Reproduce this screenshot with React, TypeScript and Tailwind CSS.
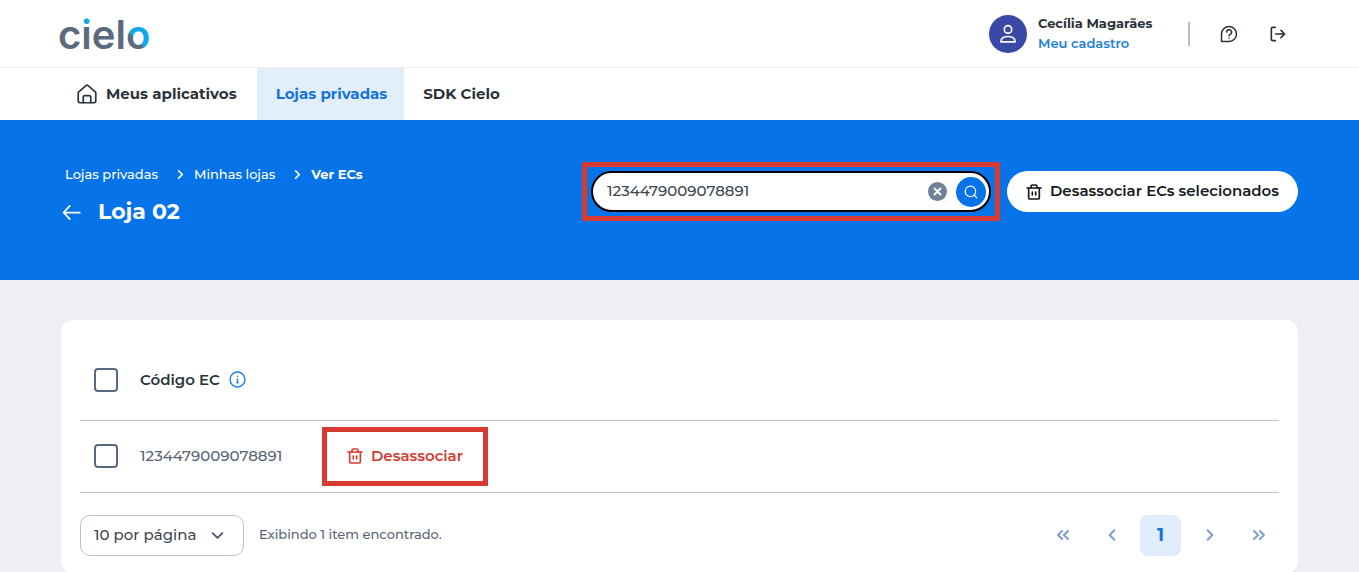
import React, { useState } from 'react'

type IconProps = {
    className?: string
}

const stores = [{ id: 1, code: '1234479009078891' }]

const Logo = () => (
    <svg
        viewBox="0 0 100 60"
        className="-ml-1 w-[100px] h-[60px]"
        role="img"
        aria-label="cielo"
    >
        <defs>
            <linearGradient
                id="dot"
                gradientUnits="userSpaceOnUse"
                x1="0"
                y1="0"
                x2="0"
                y2="60"
            >
                <stop offset="0.34" stopColor="#12a9ea" />
                <stop offset="0.34" stopColor="#5b6b7d" />
            </linearGradient>
            <linearGradient
                id="ring"
                gradientUnits="userSpaceOnUse"
                x1="67"
                y1="46"
                x2="91"
                y2="22"
            >
                <stop offset="0.46" stopColor="#5b6b7d" />
                <stop offset="0.46" stopColor="#12a9ea" />
            </linearGradient>
        </defs>
        <text
            x="1"
            y="45"
            fontSize="40"
            fontWeight="600"
            fontFamily="Inter, sans-serif"
            fill="#5b6b7d"
        >
            c<tspan fill="url(#dot)">i</tspan>el<tspan fill="url(#ring)">o</tspan>
        </text>
    </svg>
)

const Icon = ({
    className,
    children,
    strokeWidth = 2,
}: IconProps & { children: React.ReactNode; strokeWidth?: number }) => (
    <svg
        viewBox="0 0 24 24"
        fill="none"
        stroke="currentColor"
        strokeWidth={strokeWidth}
        strokeLinecap="round"
        strokeLinejoin="round"
        className={`shrink-0 ${className}`}
        aria-hidden="true"
    >
        {children}
    </svg>
)

const TrashIcon = ({ className }: IconProps) => (
    <Icon className={className} strokeWidth={2.5}>
        <path d="M1.500 6h21" />
        <path d="M4 6v14.500a2 2 0 0 0 2 2h12a2 2 0 0 0 2-2V6" />
        <path d="M7.500 6V3.500a2 2 0 0 1 2-2h5a2 2 0 0 1 2 2V6" />
        <path d="M9.500 12v4.500M14.500 12v4.500" />
    </Icon>
)

const ChevronRight = ({ className }: IconProps) => (
    <Icon className={className} strokeWidth={3.5}>
        <path d="M8 4l8 8-8 8" />
    </Icon>
)

const ChevronLeft = ({ className }: IconProps) => (
    <Icon className={className} strokeWidth={3.5}>
        <path d="M16 4l-8 8 8 8" />
    </Icon>
)

const Header = () => (
    <header className="flex items-center justify-between h-[68px] px-[61px] border-b border-[#eceef0]">
        <Logo />
        <div className="flex items-center">
            <span className="flex items-center justify-center w-[38px] h-[38px] rounded-full bg-[#3a48a8] text-white">
                <Icon className="w-5 h-5">
                    <circle cx="12" cy="6.500" r="4.500" />
                    <path d="M3.500 21.500c0-4.500 3.500-6.500 8.500-6.500s8.500 2 8.500 6.500z" />
                </Icon>
            </span>
            <div className="flex flex-col ml-[11px] pb-[2px] w-[122px] text-[13px] leading-5 whitespace-nowrap">
                <span className="font-bold">Cecília Magarães</span>
                <a href="#cadastro" className="font-semibold text-[#1a7fe0]">
                    Meu cadastro
                </a>
            </div>
            <span className="ml-7 w-[2px] h-6 bg-[#b5bccb]"></span>
            <button type="button" title="Ajuda" className="ml-[30px]">
                <Icon className="w-[18px] h-[18px]">
                    <path d="M2 22V12a10 10 0 1 1 10 10z" />
                    <path d="M8.800 9.500a3.300 3.300 0 1 1 4.700 3c-1 .5-1.500 1-1.500 2" />
                    <path d="M12 17.500v.1" />
                </Icon>
            </button>
            <button type="button" title="Sair" className="ml-8 mr-3">
                <Icon className="w-4 h-4" strokeWidth={2.5}>
                    <path d="M8 2H4a2 2 0 0 0-2 2v16a2 2 0 0 0 2 2h4" />
                    <path d="M8.500 12H22M16.500 6.500L22 12l-5.500 5.500" />
                </Icon>
            </button>
        </div>
    </header>
)

const Nav = () => (
    <nav className="flex h-[52px] px-[58px] text-[15px] font-bold">
        <a
            href="#aplicativos"
            className="flex items-center gap-[9px] pl-[19px] pr-5"
        >
            <Icon className="w-5 h-5">
                <path d="M1.500 10v10.500a2 2 0 0 0 2 2h4V16a2 2 0 0 1 2-2h5a2 2 0 0 1 2 2v6.500h4a2 2 0 0 0 2-2V10L13.300 1.900a2 2 0 0 0-2.600 0z" />
                <path d="M7.500 22.500h9" />
            </Icon>
            Meus aplicativos
        </a>
        <a
            href="#lojas"
            className="flex items-center pl-[19px] pr-[17px] bg-[#e3eefb] text-[#1473e0]"
        >
            Lojas privadas
        </a>
        <a href="#sdk" className="flex items-center px-[19px]">
            SDK Cielo
        </a>
    </nav>
)

const SearchBox = () => {
    const [search, setSearch] = useState('1234479009078891')

    return (
        <div className="p-1 border-[5px] border-[#d63a30] w-[418px]">
            <form
                className="flex items-center h-[41px] pl-[14px] pr-[3px] border-2 border-black rounded-full bg-white"
                onSubmit={(e) => e.preventDefault()}
            >
                <input
                    type="text"
                    aria-label="Buscar EC"
                    value={search}
                    onChange={(e) => setSearch(e.target.value)}
                    className="flex-1 min-w-0 text-[15px] font-medium outline-none text-[#40474f]"
                />
                <button
                    type="button"
                    title="Limpar"
                    onClick={() => setSearch('')}
                    className="flex items-center justify-center w-[19px] h-[19px] rounded-full bg-[#718096] text-white"
                >
                    <Icon className="w-[9px] h-[9px]" strokeWidth={5}>
                        <path d="M4 4l16 16M20 4L4 20" />
                    </Icon>
                </button>
                <button
                    type="submit"
                    title="Buscar"
                    className="flex items-center justify-center ml-[9px] w-[30px] h-[30px] rounded-full bg-[#0673e8] text-white"
                >
                    <Icon className="w-[14px] h-[14px]">
                        <circle cx="11" cy="11" r="9" />
                        <path d="M17.500 17.500L22 22" />
                    </Icon>
                </button>
            </form>
        </div>
    )
}

const Hero = () => (
    <section className="flex items-start justify-between h-40 px-[61px] pt-[42px] bg-[#0673e8] text-white">
        <div>
            <ol className="flex items-center pl-1 text-[13px] leading-6 font-medium">
                <li>
                    <a href="#lojas">Lojas privadas</a>
                </li>
                <li className="flex items-center">
                    <ChevronRight className="ml-[17px] mr-2 w-[11px] h-[11px]" />
                    <a href="#minhas">Minhas lojas</a>
                </li>
                <li className="flex items-center font-bold">
                    <ChevronRight className="ml-[17px] mr-2 w-[11px] h-[11px]" />
                    Ver ECs
                </li>
            </ol>
            <div className="flex items-center gap-4 mt-[10px]">
                <a href="#voltar" title="Voltar">
                    <Icon className="w-[21px] h-[21px]">
                        <path d="M21.500 12H3M10 4.500L3 12l7 7.500" />
                    </Icon>
                </a>
                <h1 className="text-[22px] leading-8 font-bold">Loja 02</h1>
            </div>
        </div>
        <div className="flex items-center gap-[7px]">
            <SearchBox />
            <button
                type="button"
                className="flex items-center justify-center gap-2 h-[41px] w-[291px] rounded-full bg-white text-[#16191d] text-[15px] font-semibold whitespace-nowrap"
            >
                <TrashIcon className="w-4 h-4" />
                Desassociar ECs selecionados
            </button>
        </div>
    </section>
)

const Checkbox = ({ label }: { label: string }) => (
    <input
        type="checkbox"
        aria-label={label}
        className="block ml-[14px] appearance-none w-6 h-6 border-2 border-[#5a6980] rounded-[4px] bg-white checked:bg-[#0673e8]"
    />
)

const StoreTable = () => (
    <table className="w-full table-fixed text-left">
        <thead>
            <tr className="h-20 border-b border-[#bcc3cd]">
                <th className="w-[60px]">
                    <Checkbox label="Selecionar todos" />
                </th>
                <th className="w-[182px] text-[15px] font-semibold">
                    <span className="flex items-center gap-[9px]">
                        Código EC
                        <Icon className="w-[17px] h-[17px] text-[#1a7fe0]">
                            <circle cx="12" cy="12" r="10.500" />
                            <path d="M12 7.500v.2M11.500 11.500h.5v5M11 16.500h2" />
                        </Icon>
                    </span>
                </th>
                <th aria-label="Ações"></th>
            </tr>
        </thead>
        <tbody>
            {stores.map((store) => (
                <tr key={store.id} className="h-[72px] border-b border-[#bcc3cd]">
                    <td>
                        <Checkbox label={`Selecionar ${store.code}`} />
                    </td>
                    <td className="text-[15px] font-medium text-[#5a6675]">
                        {store.code}
                    </td>
                    <td>
                        <div className="flex items-center justify-center w-[166px] h-[59px] border-[5px] border-[#d63a30]">
                            <button
                                type="button"
                                className="flex items-center gap-2 text-[15px] font-semibold text-[#d63a30]"
                            >
                                <TrashIcon className="w-4 h-4" />
                                Desassociar
                            </button>
                        </div>
                    </td>
                </tr>
            ))}
        </tbody>
    </table>
)

const Pagination = () => (
    <div className="flex items-center justify-between pt-[22px] pb-[17px]">
        <div className="flex items-center gap-[15px]">
            <div className="relative">
                <select
                    aria-label="Itens por página"
                    className="appearance-none w-[164px] h-[41px] pl-[13px] pr-10 border border-[#bcc3cd] rounded-[10px] bg-white text-[15px] font-medium text-[#40474f]"
                >
                    <option>10 por página</option>
                    <option>20 por página</option>
                    <option>50 por página</option>
                </select>
                <Icon
                    className="absolute right-5 top-[14px] w-[13px] h-[13px] text-[#4b5a75] pointer-events-none"
                    strokeWidth={3.5}
                >
                    <path d="M3 7.500l9 9 9-9" />
                </Icon>
            </div>
            <span className="text-[13px] font-medium text-[#5a6675]">
                Exibindo 1 item encontrado.
            </span>
        </div>
        <div className="flex items-center gap-2 text-[#7f9fce]">
            <button
                type="button"
                title="Primeira"
                className="flex items-center justify-center w-[41px] h-[41px]"
            >
                <Icon className="w-[14px] h-[14px]" strokeWidth={3.5}>
                    <path d="M10.500 5l-7 7 7 7M20.500 5l-7 7 7 7" />
                </Icon>
            </button>
            <button
                type="button"
                title="Anterior"
                className="flex items-center justify-center w-[41px] h-[41px]"
            >
                <ChevronLeft className="w-[14px] h-[14px]" />
            </button>
            <button
                type="button"
                className="w-[41px] h-[41px] rounded-[8px] bg-[#e0edfb] text-[18px] font-bold text-[#1473e0]"
            >
                1
            </button>
            <button
                type="button"
                title="Próxima"
                className="flex items-center justify-center w-[41px] h-[41px]"
            >
                <ChevronRight className="w-[14px] h-[14px]" />
            </button>
            <button
                type="button"
                title="Última"
                className="flex items-center justify-center w-[41px] h-[41px]"
            >
                <Icon className="w-[14px] h-[14px]" strokeWidth={3.5}>
                    <path d="M3.500 5l7 7-7 7M13.500 5l7 7-7 7" />
                </Icon>
            </button>
        </div>
    </div>
)

export default function App() {
    return (
        <div className="min-h-screen bg-[#eeeff2] font-['Montserrat','Inter',sans-serif] text-[#2c3239]">
            <div className="bg-white">
                <Header />
                <Nav />
            </div>
            <Hero />
            <main className="px-[61px] pt-10">
                <div className="px-[19px] pt-5 rounded-[12px] bg-white">
                    <StoreTable />
                    <Pagination />
                </div>
            </main>
        </div>
    )
}
